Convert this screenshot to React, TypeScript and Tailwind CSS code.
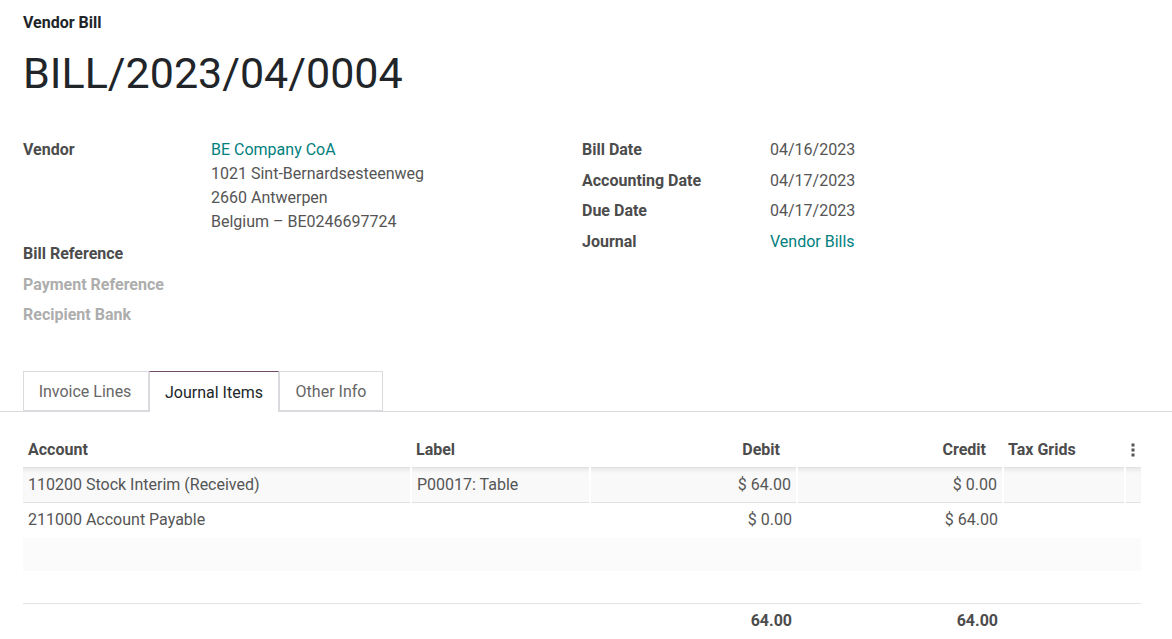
import React from 'react';

const Field = ({ label, children, muted = false }: { label: string; children?: React.ReactNode; muted?: boolean }) => (
  <div className="flex items-start min-h-[30.5px]">
    <div className={`w-[188px] shrink-0 font-bold ${muted ? 'text-[#adadad]' : 'text-[#4c4c4c]'}`}>{label}</div>
    <div className="text-[#555555]">{children}</div>
  </div>
);

const App = () => {
  return (
    <div className="min-h-screen bg-white text-[16px] leading-[24px] font-['Roboto',sans-serif] pt-[11px]">
      <div className="px-[23px]">
        <div className="text-[16px] font-bold text-[#212529]">Vendor Bill</div>
        <h1 className="mt-[12px] text-[43px] leading-[52px] text-[#212529]">BILL/2023/04/0004</h1>

        {/* Header fields */}
        <div className="grid grid-cols-[559px_1fr] mt-[39px]">
          <div>
            <div className="flex items-start mb-[8px]">
              <div className="w-[188px] shrink-0 font-bold text-[#4c4c4c]">Vendor</div>
              <div className="text-[#555555]">
                <div className="text-[#01807e]">BE Company CoA</div>
                <div>1021 Sint-Bernardsesteenweg</div>
                <div>2660 Antwerpen</div>
                <div>Belgium – BE0246697724</div>
              </div>
            </div>
            <Field label="Bill Reference" />
            <Field label="Payment Reference" muted />
            <Field label="Recipient Bank" muted />
          </div>
          <div>
            <Field label="Bill Date">04/16/2023</Field>
            <Field label="Accounting Date">04/17/2023</Field>
            <Field label="Due Date">04/17/2023</Field>
            <Field label="Journal"><span className="text-[#01807e]">Vendor Bills</span></Field>
          </div>
        </div>
      </div>

      {/* Tabs */}
      <div className="mt-[37px] border-b border-[#d8dadd] px-[23px] flex">
        <div className="h-[40px] pt-[2px] w-[126px] pr-[2px] justify-center flex items-center border border-[#d8dadd] -mb-px text-[#666666]">Invoice Lines</div>
        <div className="h-[41px] pt-[2px] w-[130px] justify-center flex items-center border-x border-[#d8dadd] border-t border-t-[#714b67] bg-white -mb-px text-[#212529]">Journal Items</div>
        <div className="h-[40px] pt-[2px] w-[104px] justify-center flex items-center border border-[#d8dadd] -mb-px text-[#666666]">Other Info</div>
      </div>

      {/* Journal items table */}
      <div className="px-[23px] pr-[31px] mt-[21px]">
        <table className="w-full table-fixed border-collapse text-[#4c4c4c]">
          <colgroup>
            <col className="w-[388px]" />
            <col className="w-[179px]" />
            <col className="w-[207px]" />
            <col className="w-[206px]" />
            <col className="w-[122px]" />
            <col className="w-[16px]" />
          </colgroup>
          <thead>
            <tr className="h-[35px] font-bold">
              <th className="text-left px-[5px]">Account</th>
              <th className="text-left px-[5px]">Label</th>
              <th className="text-right px-[5px]"><span className="mr-[12px]">Debit</span></th>
              <th className="text-right px-[5px]"><span className="mr-[12px]">Credit</span></th>
              <th className="text-left px-[5px] whitespace-nowrap">Tax Grids</th>
              <th className="text-center">
                <svg width="4" height="14" viewBox="0 0 4 14" className="inline-block mt-[-2px]" fill="#555555">
                  <rect x="0.5" y="0.5" width="3" height="3" />
                  <rect x="0.5" y="5.5" width="3" height="3" />
                  <rect x="0.5" y="10.5" width="3" height="3" />
                </svg>
              </th>
            </tr>
          </thead>
          <tbody className="text-[#555555]">
            <tr className="h-[35px] bg-[#f9f9f9] shadow-[inset_0_4px_4px_-2px_rgba(0,0,0,0.08)] border-t border-[#e2e2e2] border-b border-b-[#e2e2e2]">
              <td className="px-[5px] border-r-2 border-white">110200 Stock Interim (Received)</td>
              <td className="px-[5px] border-r-2 border-white">P00017: Table</td>
              <td className="px-[5px] text-right border-r-2 border-white">$ 64.00</td>
              <td className="px-[5px] text-right border-r-2 border-white">$ 0.00</td>
              <td className="px-[5px] border-r-2 border-white"></td>
              <td></td>
            </tr>
            <tr className="h-[35px]">
              <td className="px-[5px]">211000 Account Payable</td>
              <td className="px-[5px]"></td>
              <td className="px-[5px] text-right">$ 0.00</td>
              <td className="px-[5px] text-right">$ 64.00</td>
              <td></td>
              <td></td>
            </tr>
            <tr className="h-[33px] bg-[#fbfbfb]">
              <td colSpan={6}></td>
            </tr>
            <tr className="h-[33px] border-b border-[#e2e2e2]">
              <td colSpan={6}></td>
            </tr>
          </tbody>
          <tfoot>
            <tr className="h-[34px] font-bold text-[#4c4c4c]">
              <td></td>
              <td></td>
              <td className="px-[5px] text-right">64.00</td>
              <td className="px-[5px] text-right">64.00</td>
              <td></td>
              <td></td>
            </tr>
          </tfoot>
        </table>
      </div>
    </div>
  );
};

export default App;
